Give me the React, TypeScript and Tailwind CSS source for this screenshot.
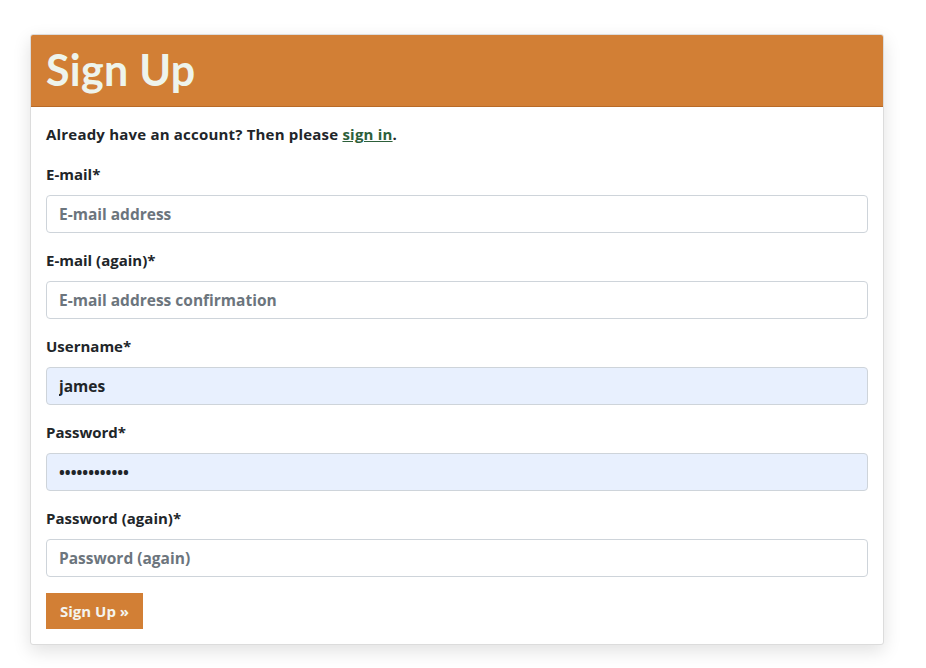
import React from "react";

const font = { fontFamily: "'Open Sans', Lato, sans-serif" };
const titleFont = { fontFamily: "Lato, 'Open Sans', sans-serif" };

type Field = {
  label: string;
  placeholder: string;
  value?: string;
};

const fields: Field[] = [
  { label: "E-mail*", placeholder: "E-mail address" },
  { label: "E-mail (again)*", placeholder: "E-mail address confirmation" },
  { label: "Username*", placeholder: "Username", value: "james" },
  { label: "Password*", placeholder: "Password", value: "••••••••••••" },
  { label: "Password (again)*", placeholder: "Password (again)" },
];

export default function App() {
  return (
    <div className="min-h-screen bg-white pt-[34px] pl-[30px]" style={font}>
      <div className="w-[854px] rounded-[3px] border border-[#dcdcdc] bg-white shadow-[0_6px_18px_rgba(0,0,0,0.12)] overflow-hidden">
        <div className="h-[72px] bg-[#d27f35] border-b border-[#b86a27] px-[15px] flex items-center">
          <h1 className="text-[43px] font-bold leading-none text-[#eef4ec] tracking-[0.3px] pb-[2px]" style={titleFont}>
            Sign Up
          </h1>
        </div>
        <form className="px-[15px] pt-[16px] pb-[15px]" onSubmit={(e) => e.preventDefault()}>
          <p className="text-[15px] font-bold leading-[22px] tracking-[0.2px] text-[#212529] mb-[18px]">
            Already have an account? Then please{" "}
            <a href="#" className="text-[#2d5f3a] underline">sign in</a>.
          </p>
          {fields.map((f) => (
            <div key={f.label} className="mb-[16px]">
              <label className="block text-[15px] font-bold leading-[22px] text-[#212529] mb-[10px]">{f.label}</label>
              <input
                type="text"
                placeholder={f.placeholder}
                defaultValue={f.value}
                className={`block w-full h-[38px] rounded-[4px] border border-[#ced4da] px-[12px] text-[15.5px] font-bold text-[#212529] placeholder:text-[#6c757d] outline-none ${
                  f.value ? "bg-[#e8f0fe]" : "bg-white"
                }`}
                style={font}
              />
            </div>
          ))}
          <button
            type="submit"
            className="h-[36px] px-[14px] bg-[#d27f35] text-[#f4f4ee] text-[15px] font-bold"
            style={font}
          >
            Sign Up »
          </button>
        </form>
      </div>
    </div>
  );
}
